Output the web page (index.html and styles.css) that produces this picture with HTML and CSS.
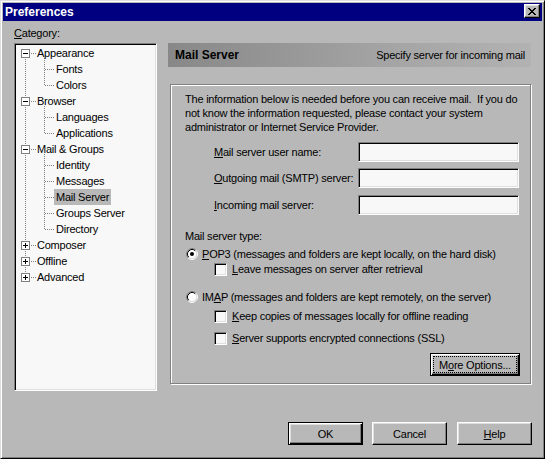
FILE: index.html
```html
<!DOCTYPE html>
<html>
<head>
<meta charset="utf-8">
<title>Preferences</title>
<link rel="stylesheet" href="styles.css">
</head>
<body>
<div class="window">
  <div class="titlebar">
    <span class="title">Preferences</span>
    <button class="close" type="button" aria-label="Close">
      <svg width="8" height="7" viewBox="0 0 8 7" fill="#000" shape-rendering="crispEdges">
        <rect x="0" y="0" width="2" height="1"/><rect x="6" y="0" width="2" height="1"/>
        <rect x="1" y="1" width="2" height="1"/><rect x="5" y="1" width="2" height="1"/>
        <rect x="2" y="2" width="4" height="1"/>
        <rect x="3" y="3" width="2" height="1"/>
        <rect x="2" y="4" width="4" height="1"/>
        <rect x="1" y="5" width="2" height="1"/><rect x="5" y="5" width="2" height="1"/>
        <rect x="0" y="6" width="2" height="1"/><rect x="6" y="6" width="2" height="1"/>
      </svg>
    </button>
  </div>

  <div class="main">
    <div class="left">
      <div class="cat-label"><u>C</u>ategory:</div>
      <div class="tree">
        <svg class="tree-lines" width="139" height="344" viewBox="0 0 139 344" fill="none" stroke="#808080" stroke-dasharray="1 1" shape-rendering="crispEdges">
          <path d="M9.5 8V233"/>
          <path d="M15 8.5H21M15 56.5H21M15 104.5H21M15 200.5H21M15 216.5H21M15 232.5H21"/>
          <path d="M28.5 13V41M28.5 61V89M28.5 109V185"/>
          <path d="M29 24.5H38M29 40.5H38M29 72.5H38M29 88.5H38M29 120.5H38M29 136.5H38M29 152.5H38M29 168.5H38M29 184.5H38"/>
        </svg>
        <div class="rows">
          <div class="row root"><svg class="exp" width="9" height="9" viewBox="0 0 9 9" shape-rendering="crispEdges"><rect x=".5" y=".5" width="8" height="8" fill="#fff" stroke="#808080"/><path d="M2 4.5h5" stroke="#000"/></svg><span class="lbl">Appearance</span></div>
          <div class="row child"><span class="lbl">Fonts</span></div>
          <div class="row child"><span class="lbl">Colors</span></div>
          <div class="row root"><svg class="exp" width="9" height="9" viewBox="0 0 9 9" shape-rendering="crispEdges"><rect x=".5" y=".5" width="8" height="8" fill="#fff" stroke="#808080"/><path d="M2 4.5h5" stroke="#000"/></svg><span class="lbl">Browser</span></div>
          <div class="row child"><span class="lbl">Languages</span></div>
          <div class="row child"><span class="lbl">Applications</span></div>
          <div class="row root"><svg class="exp" width="9" height="9" viewBox="0 0 9 9" shape-rendering="crispEdges"><rect x=".5" y=".5" width="8" height="8" fill="#fff" stroke="#808080"/><path d="M2 4.5h5" stroke="#000"/></svg><span class="lbl">Mail &amp; Groups</span></div>
          <div class="row child"><span class="lbl">Identity</span></div>
          <div class="row child"><span class="lbl">Messages</span></div>
          <div class="row child"><span class="lbl sel">Mail Server</span></div>
          <div class="row child"><span class="lbl">Groups Server</span></div>
          <div class="row child"><span class="lbl">Directory</span></div>
          <div class="row root"><svg class="exp" width="9" height="9" viewBox="0 0 9 9" shape-rendering="crispEdges"><rect x=".5" y=".5" width="8" height="8" fill="#fff" stroke="#808080"/><path d="M2 4.5h5M4.5 2v5" stroke="#000"/></svg><span class="lbl">Composer</span></div>
          <div class="row root"><svg class="exp" width="9" height="9" viewBox="0 0 9 9" shape-rendering="crispEdges"><rect x=".5" y=".5" width="8" height="8" fill="#fff" stroke="#808080"/><path d="M2 4.5h5M4.5 2v5" stroke="#000"/></svg><span class="lbl">Offline</span></div>
          <div class="row root"><svg class="exp" width="9" height="9" viewBox="0 0 9 9" shape-rendering="crispEdges"><rect x=".5" y=".5" width="8" height="8" fill="#fff" stroke="#808080"/><path d="M2 4.5h5M4.5 2v5" stroke="#000"/></svg><span class="lbl">Advanced</span></div>
        </div>
      </div>
    </div>

    <div class="right">
      <div class="header">
        <span class="header-title">Mail Server</span>
        <span class="header-desc">Specify server for incoming mail</span>
      </div>
      <div class="group">
        <div class="para">
          <div class="line">The information below is needed before you can receive mail.  If you do</div>
          <div class="line">not know the information requested, please contact your system</div>
          <div class="line">administrator or Internet Service Provider.</div>
        </div>
        <div class="field f1"><label><u>M</u>ail server user name:</label><span class="input"></span></div>
        <div class="field f2"><label><u>O</u>utgoing mail (SMTP) server:</label><span class="input"></span></div>
        <div class="field f3"><label><u>I</u>ncoming mail server:</label><span class="input"></span></div>

        <div class="type-label">Mail server type:</div>
        <div class="opt radio r1">
          <svg width="12" height="12" viewBox="0 0 12 12" fill="none">
            <circle cx="6" cy="6" r="4.5" fill="#fff"/>
            <path d="M2.11 9.89A5.5 5.5 0 0 1 9.89 2.11" stroke="#808080"/>
            <path d="M9.89 2.11A5.5 5.5 0 0 1 2.11 9.89" stroke="#fff"/>
            <path d="M2.82 9.18A4.5 4.5 0 0 1 9.18 2.82" stroke="#000"/>
            <path d="M9.18 2.82A4.5 4.5 0 0 1 2.82 9.18" stroke="#dfdfdf"/>
            <circle cx="6" cy="6" r="2" fill="#000"/>
          </svg>
          <span><u>P</u>OP3 (messages and folders are kept locally, on the hard disk)</span>
        </div>
        <div class="opt check c1"><span class="box"></span><span><u>L</u>eave messages on server after retrieval</span></div>
        <div class="opt radio r2">
          <svg width="12" height="12" viewBox="0 0 12 12" fill="none">
            <circle cx="6" cy="6" r="4.5" fill="#fff"/>
            <path d="M2.11 9.89A5.5 5.5 0 0 1 9.89 2.11" stroke="#808080"/>
            <path d="M9.89 2.11A5.5 5.5 0 0 1 2.11 9.89" stroke="#fff"/>
            <path d="M2.82 9.18A4.5 4.5 0 0 1 9.18 2.82" stroke="#000"/>
            <path d="M9.18 2.82A4.5 4.5 0 0 1 2.82 9.18" stroke="#dfdfdf"/>
          </svg>
          <span>IM<u>A</u>P (messages and folders are kept remotely, on the server)</span>
        </div>
        <div class="opt check c2"><span class="box"></span><span><u>K</u>eep copies of messages locally for offline reading</span></div>
        <div class="opt check c3"><span class="box"></span><span><u>S</u>erver supports encrypted connections (SSL)</span></div>
        <div class="more-row">
          <button class="btn default more" type="button"><span class="focus">M<u>o</u>re Options...</span></button>
        </div>
      </div>
    </div>
  </div>

  <div class="buttons">
    <button class="btn default ok" type="button">OK</button>
    <button class="btn cancel" type="button">Cancel</button>
    <button class="btn help" type="button"><u>H</u>elp</button>
  </div>
</div>
</body>
</html>
```

FILE: styles.css
```css
html, body {
  margin: 0;
  padding: 0;
  background: #b8b8b8;
}

body {
  font-family: "Liberation Sans", Arial, sans-serif;
  font-size: 11px;
  letter-spacing: -0.22px;
  color: #000;
}

.window {
  width: 545px;
  height: 459px;
  box-sizing: border-box;
  border: 1px solid;
  border-color: #dfdfdf #000 #000 #dfdfdf;
  box-shadow: inset 1px 1px #fff, inset -1px -1px #808080;
  padding: 2px;
  background: #b8b8b8;
  display: flex;
  flex-direction: column;
}

/* Title bar */
.titlebar {
  height: 18px;
  flex: none;
  background: #000080;
  color: #fff;
  display: flex;
  justify-content: space-between;
  align-items: center;
  padding: 0 2px 0 2px;
}

.title {
  font-weight: bold;
  font-size: 12px;
  letter-spacing: 0;
}

.close {
  width: 16px;
  height: 14px;
  margin: 0;
  padding: 0;
  box-sizing: border-box;
  background: #b8b8b8;
  border: 1px solid;
  border-color: #fff #000 #000 #fff;
  box-shadow: inset -1px -1px #808080, inset 1px 1px #dfdfdf;
  display: flex;
  align-items: center;
  justify-content: center;
  align-self: flex-start;
  margin-top: 1px;
}

.close svg {
  display: block;
}

/* Main area */
.main {
  display: flex;
  gap: 11px;
  padding: 6px 11px 0 11px;
}

.left {
  width: 143px;
  flex: none;
}

.cat-label {
  line-height: 13px;
  height: 13px;
  margin-bottom: 3px;
}

.tree {
  height: 348px;
  box-sizing: border-box;
  border: 1px solid;
  border-color: #808080 #fff #fff #808080;
  box-shadow: inset 1px 1px #000, inset -1px -1px #dfdfdf;
  padding: 1px;
  background: #f8f8f8;
  position: relative;
  overflow: hidden;
}

.tree-lines {
  position: absolute;
  top: 1px;
  left: 1px;
}

.rows {
  position: relative;
}

.row {
  height: 16px;
  display: flex;
  align-items: center;
  white-space: nowrap;
}

.row.root {
  padding-left: 5px;
}

.row.root .lbl {
  margin-left: 7px;
}

.row.child {
  padding-left: 40px;
}

.exp {
  display: block;
  flex: none;
}

.lbl {
  line-height: 15px;
}

.lbl.sel {
  background: #b8b8b8;
  padding: 0 2px;
  margin-left: -2px;
  line-height: 16px;
}

/* Right panel */
.right {
  width: 363px;
  flex: none;
  display: flex;
  flex-direction: column;
  margin-top: 16px;
}

.header {
  height: 24px;
  display: flex;
  align-items: center;
  justify-content: space-between;
  padding: 0 6px 0 7px;
  background: linear-gradient(to right, #888888, #a4a4a4 60%, #b2b2b2);
}

.header-title {
  font-weight: bold;
  font-size: 12px;
  letter-spacing: 0;
}

.group {
  margin: 17px 0 0 2px;
  height: 300px;
  box-sizing: border-box;
  border: 1px solid #808080;
  box-shadow: inset 1px 1px #fff, 1px 1px #fff;
  padding: 7px 10px 0 14px;
}

.para .line {
  white-space: pre;
  line-height: 14px;
  height: 14px;
}

.field {
  display: flex;
  align-items: center;
  height: 20px;
  padding-left: 29px;
  white-space: nowrap;
}

.field.f1 { margin-top: 8px; }
.field.f2 { margin-top: 6px; }
.field.f3 { margin-top: 7px; }

.field label {
  width: 144px;
  flex: none;
}

.input {
  display: block;
  width: 161px;
  height: 20px;
  box-sizing: border-box;
  border: 1px solid;
  border-color: #808080 #fff #fff #808080;
  box-shadow: inset 1px 1px #000, inset -1px -1px #dfdfdf;
  background: #f8f8f8;
}

.type-label {
  margin-top: 14px;
  line-height: 14px;
  height: 14px;
}

.opt {
  display: flex;
  align-items: center;
  height: 14px;
  line-height: 14px;
  white-space: nowrap;
}

.opt.radio {
  padding-left: 1px;
  gap: 4px;
}

.opt.radio svg {
  display: block;
  flex: none;
}

.opt.check {
  padding-left: 29px;
  gap: 5px;
}

.opt.r1 { margin-top: 4px; }
.opt.c1 { margin-top: 1px; }
.opt.r2 { margin-top: 14px; }
.opt.c2 { margin-top: 5px; }
.opt.c3 { margin-top: 8px; }

.box {
  display: block;
  flex: none;
  width: 13px;
  height: 13px;
  box-sizing: border-box;
  border: 1px solid;
  border-color: #808080 #fff #fff #808080;
  box-shadow: inset 1px 1px #000, inset -1px -1px #dfdfdf;
  background: #f8f8f8;
}

.more-row {
  display: flex;
  justify-content: flex-end;
  margin-top: 8px;
}

/* Buttons */
.btn {
  font-family: "Liberation Sans", Arial, sans-serif;
  font-size: 11px;
  letter-spacing: -0.22px;
  color: #000;
  width: 75px;
  height: 23px;
  box-sizing: border-box;
  margin: 0;
  padding: 0;
  background: #b8b8b8;
  border: 1px solid;
  border-color: #fff #000 #000 #fff;
  box-shadow: inset -1px -1px #808080, inset 1px 1px #dfdfdf;
}

.btn.default {
  border-color: #000;
  box-shadow: inset 1px 1px #fff, inset -1px -1px #000, inset -2px -2px #808080, inset 2px 2px #dfdfdf;
}

.btn.more {
  width: 90px;
  padding: 2px;
  display: flex;
}

.focus {
  flex: 1;
  display: flex;
  align-items: center;
  justify-content: center;
  border: 1px dotted #000;
}

.buttons {
  display: flex;
  justify-content: flex-end;
  margin-top: 31px;
  padding-right: 10px;
}

.btn.cancel { margin-left: 9px; }
.btn.help { margin-left: 10px; }
```
